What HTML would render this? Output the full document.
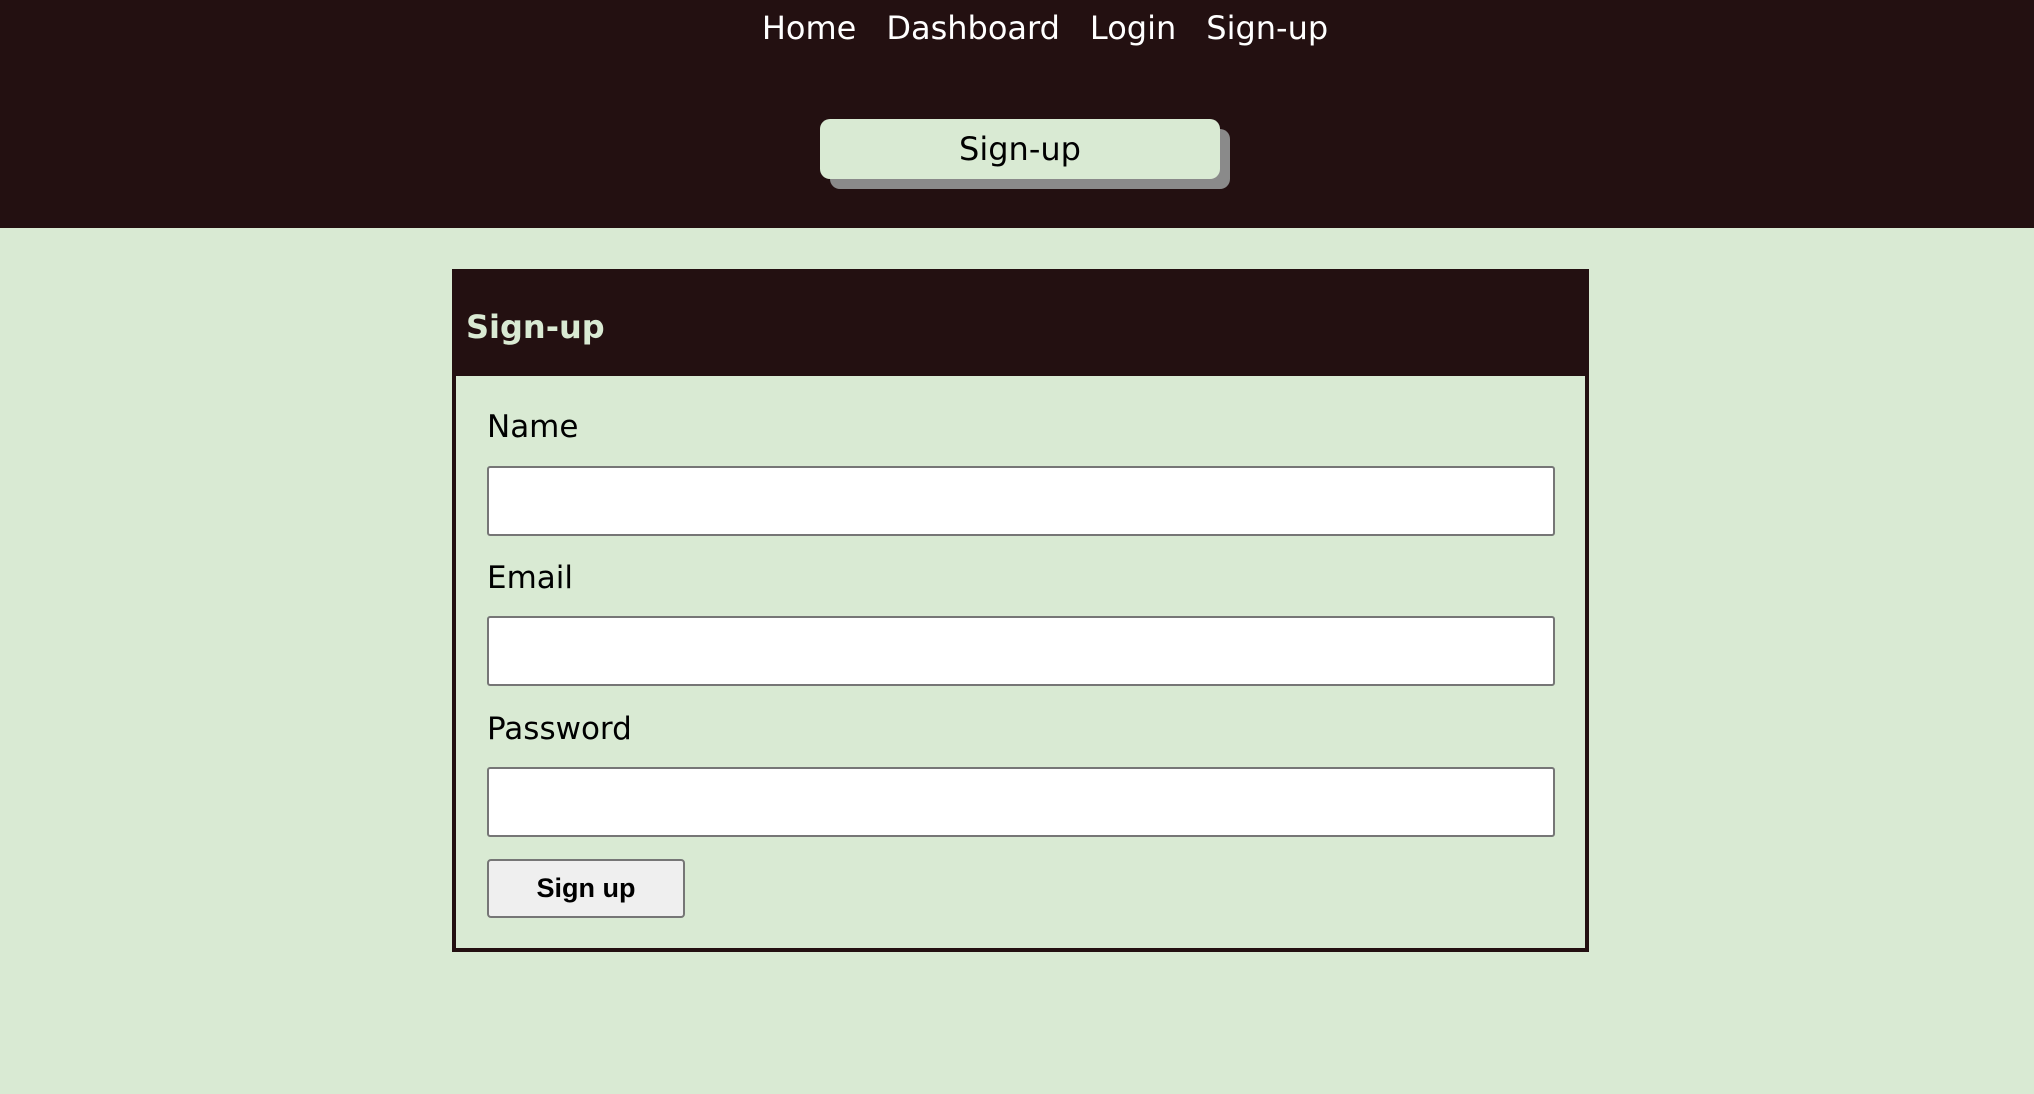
<!DOCTYPE html>
<html><head><style>
*{box-sizing:border-box;margin:0;padding:0}
body{width:2034px;height:1094px;background:#d9ead3;font-family:"DejaVu Sans",sans-serif;position:relative;overflow:hidden}
.hdr{position:absolute;left:0;top:0;width:2034px;height:228px;background:#231011}
.nav{position:absolute;top:4px;left:0;width:2034px;padding-left:56px;text-align:center;color:#fff;font-size:32px;line-height:48px}
.nav span{margin:0 15px}
.sh{position:absolute;left:830px;top:129px;width:400px;height:60px;background:#8a8a8a;border-radius:10px}
.btn{position:absolute;left:820px;top:119px;width:400px;height:60px;background:#d9ead3;border-radius:10px;text-align:center;font-size:32px;line-height:60px;color:#000}
.card{position:absolute;left:452px;top:269px;width:1137px;height:683px;border:4px solid #231011}
.ch{position:absolute;left:0;top:0;width:100%;height:103px;background:#231011;color:#d9ead3;font-weight:bold;font-size:32px;padding-left:10px;line-height:108px}
.lbl{position:absolute;left:31px;font-size:31px;color:#000}
.inp{position:absolute;left:31px;width:1068px;height:70px;background:#fff;border:2px solid #767676;border-radius:3px}
.sb{position:absolute;left:31px;top:586px;width:198px;height:59px;background:#efefef;border:2px solid #767676;border-radius:4px;font-family:"Liberation Sans",sans-serif;font-weight:bold;font-size:27px;text-align:center;line-height:55px}
</style></head><body>
<div class="hdr">
<div class="nav"><span>Home</span><span>Dashboard</span><span>Login</span><span>Sign-up</span></div>
<div class="sh"></div><div class="btn">Sign-up</div>
</div>
<div class="card">
<div class="ch">Sign-up</div>
<div class="lbl" style="top:136px">Name</div>
<div class="inp" style="top:193px"></div>
<div class="lbl" style="top:287px">Email</div>
<div class="inp" style="top:343px"></div>
<div class="lbl" style="top:438px">Password</div>
<div class="inp" style="top:494px"></div>
<div class="sb">Sign up</div>
</div>
</body></html>
